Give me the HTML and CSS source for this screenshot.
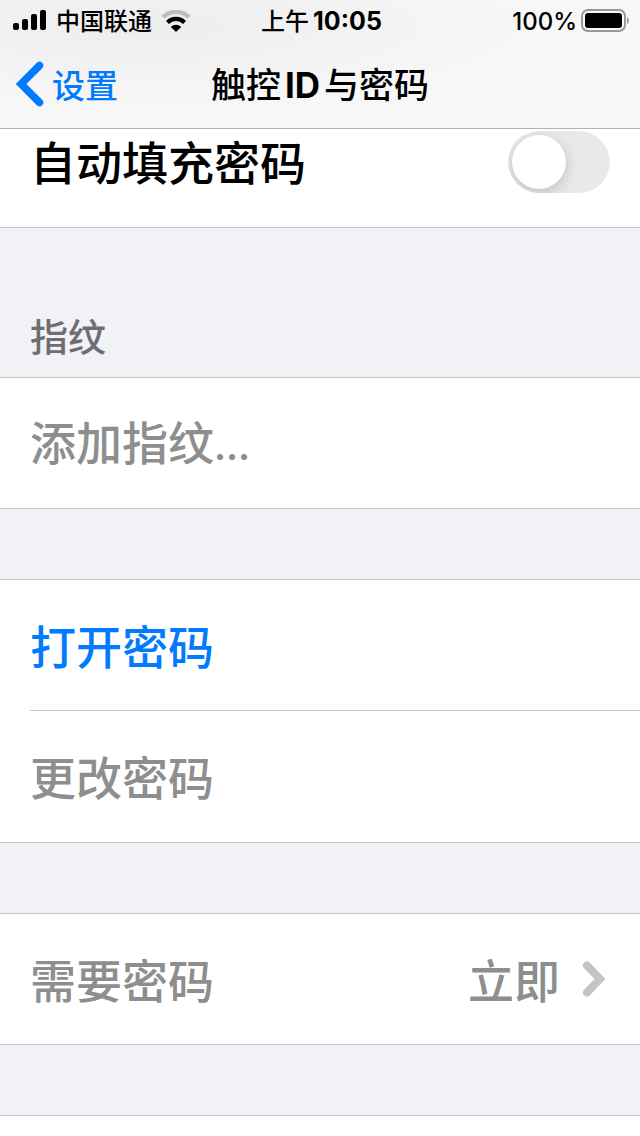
FILE: index.html
```html
<!DOCTYPE html>
<html lang="zh-CN">
<head>
  <meta charset="UTF-8">
  <meta name="viewport" content="width=device-width, initial-scale=1.0">
  <title>触控 ID 与密码</title>
  <link rel="stylesheet" href="styles.css">
</head>
<body>

  <header class="top">
    <!-- 状态栏 -->
    <div class="status-bar">
      <div class="status-left">
        <svg class="signal" width="34" height="22" viewBox="0 0 34 22">
          <rect x="0" y="13" width="6" height="7" rx="2"/>
          <rect x="9" y="9" width="6" height="11" rx="2"/>
          <rect x="18" y="4" width="6" height="16" rx="2"/>
          <rect x="27" y="0" width="6" height="20" rx="2"/>
        </svg>
        <span class="carrier">中国联通</span>
        <svg class="wifi" width="30" height="22" viewBox="0 0 30 22">
          <path d="M2 7.2A18.6 18.6 0 0 1 28 7.2" fill="none" stroke="#bdbdbd" stroke-width="4.2"/>
          <path d="M6.500 12.500A12 12 0 0 1 23.500 12.500" fill="none" stroke="#000" stroke-width="4.2"/>
          <path d="M15 22L9.800 17A7.400 7.400 0 0 1 20.200 17Z"/>
        </svg>
      </div>
      <div class="time">上午<b>10:05</b></div>
      <div class="status-right">
        <span>100%</span>
        <svg width="49" height="24" viewBox="0 0 49 24">
          <rect x="1" y="1" width="43" height="21" rx="6" fill="#fafafa" stroke="#999" stroke-width="2"/>
          <rect x="4" y="4" width="37" height="15" rx="3"/>
          <path d="M46 8Q48 9 48 11.500Q48 14 46 15Z" fill="#999"/>
        </svg>
      </div>
    </div>

    <!-- 导航栏 -->
    <nav class="nav-bar">
      <a class="back" href="#">
        <svg width="28" height="46" viewBox="0 0 28 46">
          <path d="M23.500 4.500L5 23L23.500 41.500" fill="none" stroke="#007aff" stroke-width="7.500" stroke-linecap="round"/>
        </svg>
        <span>设置</span>
      </a>
      <h1>触控<b>ID</b>与密码</h1>
    </nav>
  </header>

  <main>
    <section class="group group-first">
      <div class="row row-scrolled">
        <label for="autofill">自动填充密码</label>
        <input class="switch" type="checkbox" role="switch" id="autofill">
      </div>
    </section>

    <h2>指纹</h2>
    <section class="group">
      <button class="row" disabled><span>添加指纹<span class="dots">...</span></span></button>
    </section>

    <section class="group">
      <button class="row row-link">打开密码</button>
      <button class="row" disabled>更改密码</button>
    </section>

    <section class="group">
      <button class="row" disabled>
        <span>需要密码</span>
        <span class="value">立即
          <svg width="28" height="38" viewBox="0 0 28 38">
            <path d="M5 5.500L18 19L5 32.500" fill="none" stroke="#c4c4c6" stroke-width="8" stroke-linecap="round"/>
          </svg>
        </span>
      </button>
    </section>

    <section class="group group-last"></section>
  </main>

</body>
</html>
```
FILE: styles.css
```css
* {
  box-sizing: border-box;
}

body {
  margin: 0;
  min-height: 100vh;
  display: flex;
  flex-direction: column;
  background-color: #f2f1f6;
  color: #000;
  font-family: Inter, "Noto Sans CJK SC", sans-serif;
  font-weight: 500;
}

/* 顶部栏 */
.top {
  position: sticky;
  top: 0;
  z-index: 1;
  background: radial-gradient(ellipse at 22% 20%, #ededed, #f7f7f7 55%);
  border-bottom: 1px solid #b2b2b2;
}

.status-bar {
  display: grid;
  grid-template-columns: 1fr auto 1fr;
  align-items: center;
  height: 40px;
  padding: 0 10px 0 13px;
  font-size: 24px;
  line-height: 38px;
}

.status-left,
.status-right {
  display: flex;
  align-items: center;
}

.status-left {
  gap: 9px;
}

.status-right {
  justify-content: flex-end;
  gap: 4px;
}

.status-bar span,
.time {
  padding-top: 2px;
}

.time b {
  margin-left: 4px;
  font-size: 25px;
}

.nav-bar {
  display: grid;
  grid-template-columns: 1fr auto 1fr;
  align-items: center;
  height: 88px;
  padding: 0 16px;
}

.back {
  display: flex;
  align-items: center;
  gap: 8px;
  color: #007aff;
  font-size: 33px;
  text-decoration: none;
}

h1 {
  margin: 0;
  padding-bottom: 3px;
  font-size: 35px;
  font-weight: 500;
}

h1 b {
  margin: 0 4px;
}

/* 列表 */
main {
  flex: 1;
  display: flex;
  flex-direction: column;
}

h2 {
  margin: 0;
  padding: 80px 30px 11px;
  color: #6d6d72;
  font-size: 38px;
  font-weight: 500;
  line-height: 58px;
}

.group {
  border-top: 1px solid #c6c6c8;
  border-bottom: 1px solid #c6c6c8;
  background-color: #fff;
}

.group + .group {
  margin-top: 70px;
}

.group-first {
  border-top: 0;
}

.group-last {
  flex: 1;
  min-height: 20px;
  border-bottom: 0;
}

.row {
  display: flex;
  align-items: center;
  width: 100%;
  min-height: 130px;
  padding: 4px 30px 0;
  border: 0;
  background: none;
  color: #000;
  font: inherit;
  font-size: 46px;
  line-height: 56px;
  text-align: left;
}

.row:disabled {
  color: #8e8e8e;
}

.row-link {
  color: #007aff;
}

.row + .row {
  min-height: 132px;
  background: linear-gradient(#c6c6c8, #c6c6c8) 30px 0 / 100% 1px no-repeat;
}

.row-scrolled {
  min-height: 98px;
  padding-top: 0;
  padding-bottom: 32px;
  justify-content: space-between;
}

.row-scrolled label {
  padding-top: 2px;
}

.dots {
  font-size: 36px;
  font-weight: 700;
}

.value {
  display: flex;
  align-items: center;
  gap: 22px;
  margin-left: auto;
}

.value svg {
  margin-bottom: 4px;
}

.switch {
  appearance: none;
  display: flex;
  align-items: center;
  width: 102px;
  height: 62px;
  margin: 0;
  padding: 4px;
  border-radius: 31px;
  background-color: #e9e9eb;
  clip-path: inset(0 round 31px);
}

.switch::before {
  content: "";
  width: 54px;
  height: 54px;
  border-radius: 50%;
  background-color: #fff;
  box-shadow: 0 4px 14px rgba(0, 0, 0, 0.18);
}

.switch:checked {
  justify-content: flex-end;
  background-color: #34c759;
}
```
